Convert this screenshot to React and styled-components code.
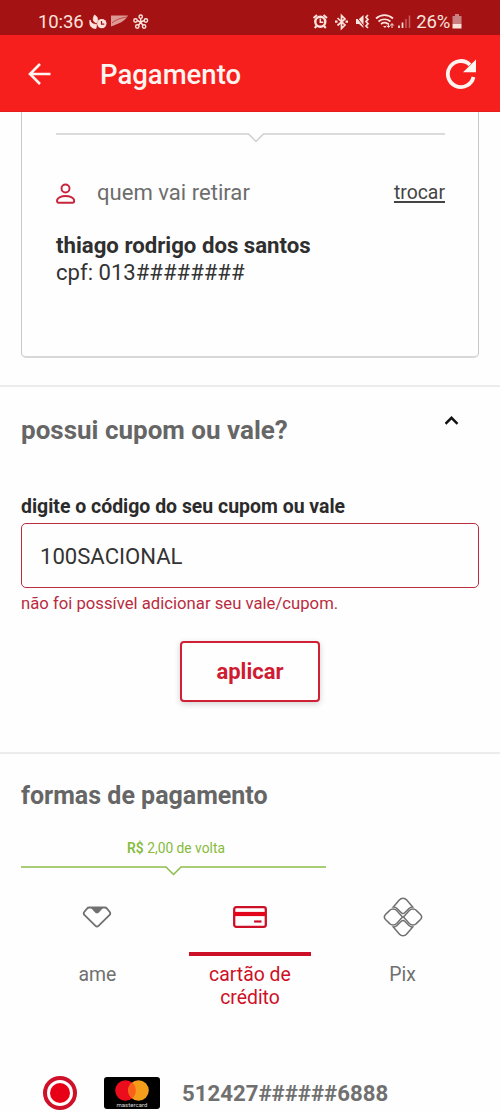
import React, {useState} from "react";
import styled, {createGlobalStyle, css} from "styled-components";

const GlobalStyle = createGlobalStyle`
  * {
    box-sizing: border-box;
  }

  body {
    margin: 0;
    background: #fefefe;
    font-family: Roboto, "Liberation Sans", sans-serif;
    color: #333;
  }

  svg {
    display: block;
    flex: none;
  }
`;

const Screen = styled.div`
  width: 500px;
  height: 1111px;
  overflow: hidden;
  background: #fefefe;
`;

const StatusBar = styled.div`
  display: flex;
  align-items: center;
  justify-content: space-between;
  height: 35px;
  padding: 9px 37px 0 38px;
  background: #a51214;
  color: #fbe3dc;
`;

const StatusGroup = styled.div`
  display: flex;
  align-items: center;
`;

const StatusText = styled.span`
  font-size: 18.5px;
  line-height: 24px;
  letter-spacing: ${props => props.$spacing || 0};
`;

const Header = styled.header`
  display: flex;
  align-items: center;
  height: 77px;
  padding: 2px 23px 0 26px;
  background: #f71e1e;
  border-bottom: 1px solid #e51c1c;
`;

const HeaderTitle = styled.h1`
  flex: 1;
  margin: 2px 0 0 48px;
  font-size: 27.5px;
  line-height: 32px;
  font-weight: 500;
  color: #fff4ef;
`;

const IconButton = styled.button`
  display: block;
  padding: 0;
  border: 0;
  background: none;
  color: inherit;
`;

const PickupSection = styled.section`
  height: 275px;
  padding: 0 21px;
  border-bottom: 2px solid #ececec;
`;

const PickupCard = styled.div`
  height: 246px;
  padding: 21px 33px 0 34px;
  border: 1px solid #c9c9c9;
  border-top: 0;
  border-bottom: 2px solid #d8d8d8;
  border-radius: 0 0 5px 5px;
`;

const PickupHeader = styled.div`
  display: flex;
  align-items: center;
  height: 28px;
  margin-top: 35px;

  svg {
    margin-top: 2px;
  }
`;

const PickupTitle = styled.span`
  flex: 1;
  margin-left: 21px;
  font-size: 22.1px;
  line-height: 28px;
  color: #6d6d6d;
`;

const ChangeLink = styled.a`
  margin-top: 1px;
  font-size: 19.4px;
  line-height: 28px;
  color: #444;
  text-decoration: underline;
  text-decoration-thickness: 2px;
  text-underline-offset: 2px;
`;

const PersonName = styled.strong`
  display: block;
  margin-top: 26px;
  font-size: 22.2px;
  line-height: 26px;
  font-weight: 700;
  color: #2f2f2f;
`;

const PersonDocument = styled.span`
  display: block;
  margin-top: 1px;
  font-size: 22.1px;
  line-height: 26px;
  color: #333;
`;

const CouponSection = styled.section`
  height: 367px;
  padding: 27px 21px 0;
  border-bottom: 2px solid #ececec;
`;

const SectionHeader = styled.div`
  display: flex;
  justify-content: space-between;
  padding-right: 20px;

  svg {
    margin-top: 2px;
  }
`;

const SectionTitle = styled.h2`
  margin: 0;
  font-size: ${props => props.$size || "26px"};
  line-height: 32px;
  font-weight: 700;
  color: #666;
`;

const CouponLabel = styled.label`
  display: block;
  margin-top: 48px;
  font-size: 19.45px;
  line-height: 26px;
  font-weight: 700;
  color: #2b2b2b;
`;

const CouponInput = styled.input`
  display: block;
  width: 458px;
  height: 65px;
  margin-top: 3px;
  padding: 0 18px;
  border: 1.5px solid #bb2c3e;
  border-radius: 5px;
  outline: 0;
  background: transparent;
  font-family: inherit;
  font-size: 22.1px;
  color: #333;
`;

const CouponError = styled.p`
  margin: 5px 0 0;
  font-size: 16.7px;
  line-height: 22px;
  color: #b92c40;
`;

const ApplyButton = styled.button`
  display: block;
  width: 140px;
  height: 61px;
  margin: 26px auto 0;
  padding: 0;
  border: 2px solid #cf2035;
  border-radius: 4px;
  background: #fefefe;
  box-shadow: 0 2px 6px rgba(0, 0, 0, 0.18);
  font-family: inherit;
  font-size: 22px;
  font-weight: 700;
  color: #cf1c33;
`;

const PaymentSection = styled.section`
  padding: 26px 21px 0;
`;

const Cashback = styled.div`
  width: 305px;
  margin-top: 27px;
`;

const CashbackText = styled.p`
  margin: 0 0 9px 5px;
  font-size: 13.8px;
  line-height: 18px;
  text-align: center;
  color: #86bb3c;

  b {
    font-weight: 600;
  }
`;

const Methods = styled.div`
  display: grid;
  grid-template-columns: repeat(3, 1fr);
  margin-top: 19px;
`;

const Method = styled.div`
  display: flex;
  flex-direction: column;
  align-items: center;
  color: #707070;

  ${props => props.$active && css`
    color: #cd1027;
  `}
`;

const MethodIcon = styled.div`
  display: flex;
  align-items: center;
  justify-content: center;
  width: 122px;
  height: 61px;
  padding-bottom: 13px;
  border-bottom: 4px solid ${props => (props.$active ? "#cd1027" : "transparent")};
`;

const MethodLabel = styled.span`
  width: 110px;
  margin-top: 7px;
  font-size: 19.4px;
  line-height: 23px;
  text-align: center;
`;

const SavedCard = styled.div`
  display: flex;
  align-items: center;
  height: 34px;
  margin-top: 67px;
  padding-left: 22px;
`;

const Radio = styled.span`
  display: flex;
  align-items: center;
  justify-content: center;
  width: 34px;
  height: 34px;
  border: 4px solid #cf1029;
  border-radius: 50%;

  &::after {
    content: "";
    width: 20px;
    height: 20px;
    border-radius: 50%;
    background: #e80016;
  }
`;

const CardBrand = styled.span`
  display: flex;
  flex-direction: column;
  align-items: center;
  width: 56px;
  height: 32px;
  margin-left: 27px;
  padding-top: 3px;
  border-radius: 3px;
  background: #000;
`;

const BrandName = styled.span`
  font-size: 6px;
  line-height: 7px;
  font-weight: 400;
  letter-spacing: 0.05px;
  color: #ddd;
`;

const CardNumber = styled.span`
  margin-left: 22px;
  font-size: 22.2px;
  line-height: 28px;
  font-weight: 700;
  color: #707070;
`;

const LeftStatusIcons = () => (
    <svg width="66" height="20" viewBox="84 12 66 20" fill="none">
        <path d="M90 20c.8 3 3 4.500 6.500 4.500l-.5 4c-5 0-7-3.500-6-8.500zM94 21.500c-1.500-2-.5-4.500.5-6.500 3.500 2 4 5 2 8z" fill="#fbe3dc" stroke="#fbe3dc" strokeWidth=".8"/>
        <circle cx="101.800" cy="23.600" r="4.700" fill="#fbe3dc"/>
        <path d="M101.500 21v3.200h2.800" stroke="#a51214" strokeWidth="1.200"/>
        <path d="M111 15.500h17c-3 6-9 8-17 11z" fill="#dd9a94"/>
        <path d="M112 23c5-4 9-5 15-6" stroke="#b94a48"/>
        <g stroke="#fbe3dc" strokeWidth="1.400">
            <path d="M140.700 22V17M140.700 22l-5-2M140.700 22l5-2M140.700 22l-3.200 5M140.700 22l3.200 5"/>
            <circle cx="140.700" cy="16.700" r="1.700" fill="#a51214"/>
            <circle cx="135.500" cy="20.500" r="1.700" fill="#a51214"/>
            <circle cx="145.900" cy="20.500" r="1.700" fill="#a51214"/>
            <circle cx="137.300" cy="26.500" r="1.700" fill="#a51214"/>
            <circle cx="144.100" cy="26.500" r="1.700" fill="#a51214"/>
        </g>
    </svg>
);

const RightStatusIcons = () => (
    <svg width="104" height="20" viewBox="312 12 104 20" fill="none" stroke="#fbe3dc">
        {/* alarm */}
        <circle cx="320.300" cy="21.800" r="5" fill="#a51214" strokeWidth="2.400"/>
        <path d="M313.500 18l3.500-3M327 18l-3.500-3M316.500 26l-1.800 2M324 26l1.800 2" strokeWidth="2"/>
        <path d="M320.300 18.500v3.800h3" strokeWidth="1.500"/>
        {/* bluetooth */}
        <path d="M337.500 18l7.500 7-3.500 3.500v-13l3.500 3.500-7.500 6.500" strokeWidth="1.700"/>
        <path d="M335 21.700h2.500M345.500 21.700h2.500" strokeWidth="2.200"/>
        {/* muted */}
        <path d="M356 19h3l4.500-4v13l-4.500-4h-3z" fill="#fbe3dc" stroke="none"/>
        <path d="M355 15l9.500 12" stroke="#a51214" strokeWidth="1"/>
        <path d="M368 15l-2 2.200 2 2.200-2 2.200 2 2.200-2 2.200 2 2" strokeWidth="1.700"/>
        {/* wifi */}
        <path d="M376 18.500c5-4.500 12-4.500 17 0M378.500 21.500c3.500-3 8.500-3 12 0M381 24c2.200-1.600 4.800-1.600 7 0" strokeWidth="1.700"/>
        <path d="M383 26l2 2 1.500-2z" fill="#fbe3dc" stroke="none"/>
        <path d="M388.500 23v4M386.800 25.500l1.700 2 1.700-2M392 28v-4M390.300 25.500l1.700-2 1.700 2" strokeWidth="1"/>
        {/* signal */}
        <path d="M399 28v-2.500M402.500 28v-5.500" strokeWidth="1.700"/>
        <path d="M406 28v-9M409.500 28V15.500" stroke="#c5625f" strokeWidth="1.500"/>
    </svg>
);

const BatteryIcon = () => (
    <svg width="13" height="18" viewBox="-2 -1 13 18">
        <path d="M3 0h4v2h2.500v8H.5V2H3z" fill="#c98080"/>
        <path d="M.5 10h9v4.500h-9z" fill="#fbe3dc"/>
    </svg>
);

const BackIcon = () => (
    <svg width="26" height="24" viewBox="0 0 26 24" fill="none" stroke="#fff4ef" strokeWidth="2.600">
        <path d="M24.500 12H4M14 2L4 12l10 10"/>
    </svg>
);

const RefreshIcon = () => (
    <svg width="32" height="32" viewBox="0 0 32 32" fill="none">
        <path d="M28.500 19A13 13 0 1 1 25 6.800" stroke="#fff4ef" strokeWidth="3.800"/>
        <path d="M31 1.500v12.800H18z" fill="#fff4ef"/>
    </svg>
);

const NotchLine = ({width, notch, color}) => (
    <svg width={width} height="10" viewBox={`0 0 ${width} 10`} fill="none" stroke={color} strokeWidth="1.500">
        <path d={`M0 1H${notch - 7.5}l7.500 7.500 7.500-7.500H${width}`}/>
    </svg>
);

const PersonIcon = () => (
    <svg width="20" height="22" viewBox="0 0 20 22" fill="none" stroke="#c8243c" strokeWidth="1.900">
        <circle cx="9.500" cy="6.500" r="4"/>
        <path d="M1 19c0-3.500 5-5 8.600-5s8.600 1.500 8.600 5c0 1-.6 1.700-1.700 1.700H2.700C1.600 20.700 1 20 1 19z"/>
    </svg>
);

const ChevronUp = () => (
    <svg width="14" height="9" viewBox="0 0 14 9" fill="none" stroke="#111" strokeWidth="2.400">
        <path d="M.5 7.800l6-6 6 6"/>
    </svg>
);

const AmeIcon = () => (
    <svg width="30" height="24" viewBox="0 0 30 24" fill="none" stroke="currentColor" strokeWidth="1.800" strokeLinejoin="round">
        <path d="M7.300 2.500h15.400c1 0 1.700.3 2.300 1.100l2.600 3.200c.9 1.100.8 2.400-.2 3.400L16.500 20.800c-.9.900-2.100.9-3 0L2.600 10.200c-1-1-1.100-2.300-.2-3.400L5 3.600c.6-.8 1.300-1.100 2.300-1.100z"/>
        <path d="M8.500 2.500h13l-4.600 4.900c-1.200 1.200-2.600 1.200-3.800 0z" fill="currentColor" stroke="none"/>
    </svg>
);

const CreditCardIcon = () => (
    <svg width="34" height="22" viewBox="0 0 34 22" fill="none" stroke="currentColor">
        <rect x="1.200" y="1.200" width="31.600" height="19.600" rx="2" strokeWidth="2.300"/>
        <path d="M1 8h32" stroke="#e3061b" strokeWidth="4.200"/>
        <path d="M21 15.500h7.500" strokeWidth="2.200"/>
    </svg>
);

const PixIcon = () => (
    <svg width="40" height="40" viewBox="0 0 40 40" fill="none" stroke="currentColor" strokeWidth="1.500">
        <path d="M10.300 10l6-6.900c2-2.400 5.400-2.400 7.400 0l6 6.900c-1.500 0-2.700.5-3.700 1.500l-4.300 4.200c-1 1-2.400 1-3.400 0L14 11.500c-1-1-2.200-1.500-3.700-1.500z"/>
        <path d="M10.300 30l6 6.900c2 2.400 5.400 2.400 7.400 0l6-6.900c-1.500 0-2.700-.5-3.700-1.500l-4.300-4.200c-1-1-2.400-1-3.400 0L14 28.500c-1 1-2.200 1.500-3.700 1.500z"/>
        <path d="M19.500 20l-5.800-6.400c-2-2.100-5.200-2.100-7.200 0l-4 3.900c-1.600 1.700-1.600 3.300 0 5l4 3.900c2 2.100 5.200 2.100 7.200 0z"/>
        <path d="M20.500 20l5.800-6.400c2-2.100 5.200-2.100 7.200 0l4 3.900c1.600 1.700 1.600 3.300 0 5l-4 3.900c-2 2.100-5.200 2.100-7.200 0z"/>
    </svg>
);

const MastercardIcon = () => (
    <svg width="34" height="21" viewBox="0 0 34 21">
        <circle cx="10.500" cy="10.500" r="10.300" fill="#eb0d1b"/>
        <circle cx="23.500" cy="10.500" r="10.300" fill="#f59d1b"/>
        <path d="M17 2.500a10.300 10.300 0 0 1 0 16 10.300 10.300 0 0 1 0-16z" fill="#f9611a"/>
    </svg>
);

const methods = [
    {id: "ame", label: "ame", icon: <AmeIcon/>},
    {id: "card", label: "cartão de crédito", icon: <CreditCardIcon/>},
    {id: "pix", label: "Pix", icon: <PixIcon/>}
];

const App = () => {
    const [coupon, setCoupon] = useState("100SACIONAL");
    const [selected, setSelected] = useState("card");

    return (
        <Screen>
            <GlobalStyle/>
            <StatusBar>
                <StatusGroup>
                    <StatusText $spacing="-0.1px">10:36</StatusText>
                    <LeftStatusIcons/>
                </StatusGroup>
                <StatusGroup>
                    <RightStatusIcons/>
                    <StatusText $spacing="-0.2px">26%</StatusText>
                    <BatteryIcon/>
                </StatusGroup>
            </StatusBar>

            <Header>
                <IconButton aria-label="voltar"><BackIcon/></IconButton>
                <HeaderTitle>Pagamento</HeaderTitle>
                <IconButton aria-label="atualizar"><RefreshIcon/></IconButton>
            </Header>

            <PickupSection>
                <PickupCard>
                    <NotchLine width={389} notch={200} color="#cfcfcf"/>
                    <PickupHeader>
                        <PersonIcon/>
                        <PickupTitle>quem vai retirar</PickupTitle>
                        <ChangeLink>trocar</ChangeLink>
                    </PickupHeader>
                    <PersonName>thiago rodrigo dos santos</PersonName>
                    <PersonDocument>cpf: 013########</PersonDocument>
                </PickupCard>
            </PickupSection>

            <CouponSection>
                <SectionHeader>
                    <SectionTitle>possui cupom ou vale?</SectionTitle>
                    <ChevronUp/>
                </SectionHeader>
                <CouponLabel htmlFor="coupon">digite o código do seu cupom ou vale</CouponLabel>
                <CouponInput id="coupon" value={coupon} onChange={e => setCoupon(e.target.value)}/>
                <CouponError>não foi possível adicionar seu vale/cupom.</CouponError>
                <ApplyButton>aplicar</ApplyButton>
            </CouponSection>

            <PaymentSection>
                <SectionTitle $size="25px">formas de pagamento</SectionTitle>
                <Cashback>
                    <CashbackText><b>R$</b> 2,00 de volta</CashbackText>
                    <NotchLine width={305} notch={152.5} color="#8cbd4a"/>
                </Cashback>
                <Methods>
                    {methods.map(({id, label, icon}) => (
                        <Method key={id} $active={id === selected} onClick={() => setSelected(id)}>
                            <MethodIcon $active={id === selected}>{icon}</MethodIcon>
                            <MethodLabel>{label}</MethodLabel>
                        </Method>
                    ))}
                </Methods>
                <SavedCard>
                    <Radio/>
                    <CardBrand>
                        <MastercardIcon/>
                        <BrandName>mastercard</BrandName>
                    </CardBrand>
                    <CardNumber>512427######6888</CardNumber>
                </SavedCard>
            </PaymentSection>
        </Screen>
    );
};

export default App;
